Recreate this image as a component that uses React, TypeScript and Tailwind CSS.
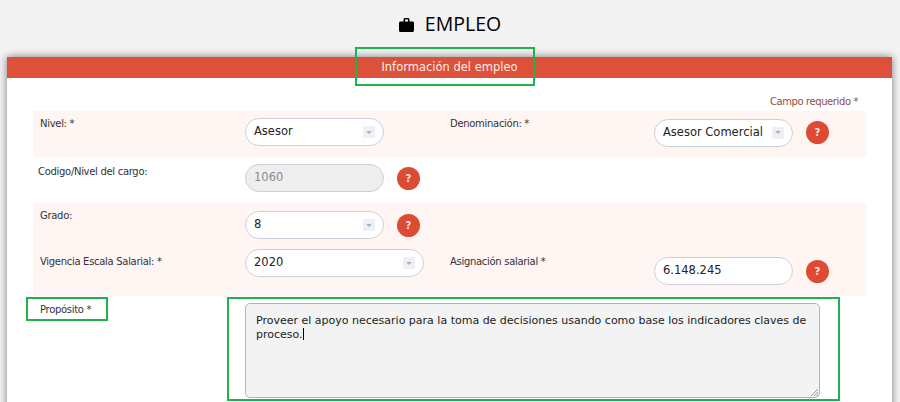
import React from 'react';

const rowGrid = 'grid grid-cols-[212px_205px_204px_1fr]';
const labelText = "font-['DejaVu_Sans',sans-serif] text-[10px] leading-[14px] tracking-[-0.3px] text-[#333]";
const fieldText = "font-['DejaVu_Sans',sans-serif] text-[11.5px]";

function Help() {
  return (
    <div className="ml-[13px] flex h-[23px] w-[23px] shrink-0 items-center justify-center rounded-full bg-[#dd4b35] font-['DejaVu_Sans',sans-serif] text-[10px] font-bold text-[#fbe4df]">
      ?
    </div>
  );
}

function Select({ value, wide }: { value: string; wide?: boolean }) {
  return (
    <div className={`flex h-[28px] items-center justify-between rounded-[14px] border border-[#ccd0dc] bg-white pl-[8px] pr-[8px] text-[#222] ${wide ? 'w-[179px]' : 'w-[139px]'} ${fieldText}`}>
      <span>{value}</span>
      <span className="flex h-[12px] w-[12px] items-center justify-center bg-[#eef0f4]">
        <span className="h-0 w-0 border-x-[3px] border-t-[3px] border-x-transparent border-t-[#a9b2c4]" />
      </span>
    </div>
  );
}

function Input({ value, disabled }: { value: string; disabled?: boolean }) {
  return (
    <div className={`flex h-[28px] w-[139px] items-center rounded-[14px] border border-[#ccd0dc] pl-[8px] ${fieldText} ${disabled ? 'bg-[#eeeeee] text-[#8a8a8a]' : 'bg-white text-[#222]'}`}>
      {value}
    </div>
  );
}

export default function App() {
  return (
    <div className="relative h-[402px] w-[900px] overflow-hidden bg-[#f3f3f3]">
      {/* Title */}
      <div className="flex h-[57px] items-start justify-center pt-[10px]">
        <svg className="mt-[8px] h-[14px] w-[15px]" viewBox="0 0 15 14">
          <path
            d="M4.5 3.5V1.6C4.5.7 5.2 0 6.1 0h2.8c.9 0 1.6.7 1.6 1.6v1.9h3c.8 0 1.5.7 1.5 1.5v7.5c0 .8-.7 1.5-1.5 1.5h-12C.7 14 0 13.300 0 12.500V5c0-.8.7-1.500 1.500-1.500h3zM6 1.500v2h3v-2H6z"
            fill="#000"
            fillRule="evenodd"
          />
        </svg>
        <h1 className="ml-[11px] font-['Open_Sans',sans-serif] text-[19.5px] leading-[27px] text-black">EMPLEO</h1>
      </div>

      {/* Card */}
      <div className="mx-[7px] h-[400px] w-[885px] bg-white shadow-[0_0_8px_rgba(0,0,0,0.5)]">
        <div className="flex h-[21px] items-center justify-center bg-[#dd5039] font-['DejaVu_Sans',sans-serif] text-[11.5px] text-[#fdeee9]">
          Información del empleo
        </div>

        <div className="px-[26px]">
          <div className="flex h-[33px] items-end justify-end pb-[2px] pr-[8px] font-['DejaVu_Sans',sans-serif] text-[10px] leading-[14px] tracking-[-0.4px] text-[#8b4f42]">
            Campo requerido *
          </div>

          {/* Nivel / Denominacion */}
          <div className={`${rowGrid} h-[46px] bg-[#fff5f3]`}>
            <div className={`${labelText} pl-[7px] pt-[6px]`}>Nivel: *</div>
            <div className="pt-[7px]">
              <Select value="Asesor" />
            </div>
            <div className={`${labelText} pt-[6px]`}>Denominación: *</div>
            <div className="flex items-center pb-[3px]">
              <Select value="Asesor Comercial" />
              <Help />
            </div>
          </div>

          {/* Codigo */}
          <div className={`${rowGrid} h-[46px]`}>
            <div className={`${labelText} pl-[5px] pt-[8px]`}>Codigo/Nivel del cargo:</div>
            <div className="flex items-start pt-[7px]">
              <Input value="1060" disabled />
              <div className="mt-[3px]">
                <Help />
              </div>
            </div>
          </div>

          <div className="h-[93px] bg-[#fff5f3]">
            {/* Grado */}
            <div className={`${rowGrid} h-[46px]`}>
              <div className={`${labelText} pl-[7px] pt-[6px]`}>Grado:</div>
              <div className="flex items-start pt-[8px]">
                <Select value="8" />
                <div className="mt-[3px]">
                  <Help />
                </div>
              </div>
            </div>

            {/* Vigencia / Asignacion */}
            <div className={rowGrid}>
              <div className={`${labelText} pl-[7px] pt-[6px]`}>Vigencia Escala Salarial: *</div>
              <div>
                <Select value="2020" wide />
              </div>
              <div className={`${labelText} pt-[6px]`}>Asignación salarial *</div>
              <div className="flex items-center pt-[8px]">
                <Input value="6.148.245" />
                <Help />
              </div>
            </div>
          </div>

          {/* Proposito */}
          <div className="grid grid-cols-[212px_575px] pt-[7px]">
            <div className={`${labelText} pl-[7px]`}>Propósito *</div>
            <div className="relative h-[95px] rounded-[5px] border border-[#a5b6cf] bg-[#f3f3f3] pl-[10px] pr-[11px] pt-[10px] font-['DejaVu_Sans',sans-serif] text-[11px] leading-[14px] text-[#222]">
              Proveer el apoyo necesario para la toma de decisiones usando como base los indicadores claves de proceso.
              <span className="inline-block h-[12px] w-px align-[-2px] bg-black" />
              <svg className="absolute bottom-0 right-0" width="9" height="9" viewBox="0 0 9 9">
                <path d="M8 1 1 8M8 4 4 8M8 6.500 6.500 8" stroke="#9a9a9a" strokeWidth="1" fill="none" />
              </svg>
            </div>
          </div>
        </div>
      </div>

      {/* Green annotation boxes */}
      <div className="absolute left-[355px] top-[47px] h-[39px] w-[180px] border-2 border-[#22b14c]" />
      <div className="absolute left-[26px] top-[297px] h-[24px] w-[82px] border-2 border-[#22b14c]" />
      <div className="absolute left-[227px] top-[297px] h-[104px] w-[613px] border-2 border-[#22b14c]" />
    </div>
  );
}
